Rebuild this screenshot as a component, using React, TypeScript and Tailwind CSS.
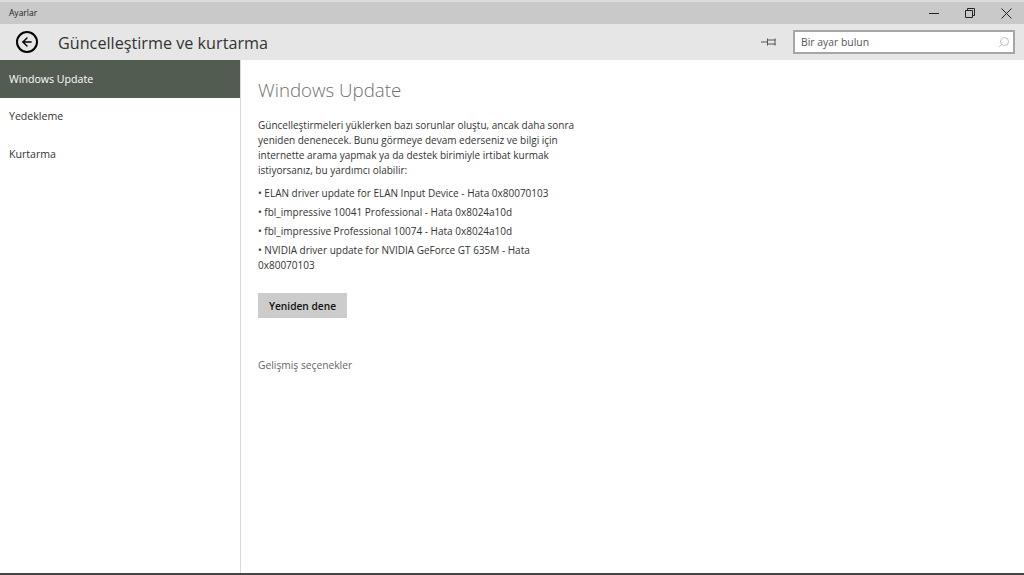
import { ArrowLeft, Search } from "lucide-react";

const NAV_ITEMS = ["Windows Update", "Yedekleme", "Kurtarma"];

const ERRORS = [
  "ELAN driver update for ELAN Input Device - Hata 0x80070103",
  "fbl_impressive 10041 Professional - Hata 0x8024a10d",
  "fbl_impressive Professional 10074 - Hata 0x8024a10d",
  "NVIDIA driver update for NVIDIA GeForce GT 635M - Hata 0x80070103",
];

function WindowButtons() {
  return (
    <div className="flex items-center text-[#222]">
      <div className="flex w-[36px] justify-center">
        <svg width="10" height="10" viewBox="0 0 10 10">
          <path d="M0 5.5h10" stroke="currentColor" fill="none" />
        </svg>
      </div>
      <div className="flex w-[36px] justify-center">
        <svg width="10" height="10" viewBox="0 0 10 10">
          <path d="M0.5 2.5h7v7h-7zM2.5 2.5v-2h7v7h-2" stroke="currentColor" fill="none" />
        </svg>
      </div>
      <div className="flex w-[36px] justify-center">
        <svg width="11" height="11" viewBox="0 0 11 11">
          <path d="M0.5 0.5l10 10M10.5 0.5l-10 10" stroke="currentColor" fill="none" />
        </svg>
      </div>
    </div>
  );
}

export default function App() {
  return (
    <div className="flex h-[575px] w-[1024px] flex-col overflow-hidden bg-white font-['Open_Sans',sans-serif] text-[#222]">
      <div className="h-[2px] bg-[#dcdcdc]" />
      <div className="flex h-[22px] items-center justify-between bg-[#c9c9c9] pl-[9px]">
        <span className="text-[8.5px]">Ayarlar</span>
        <WindowButtons />
      </div>
      <div className="flex h-[36px] items-center bg-[#e6e6e6]">
        <div className="ml-[16px] flex h-[22px] w-[22px] items-center justify-center rounded-full border-2 border-black">
          <ArrowLeft size={14} strokeWidth={2.5} className="text-black" />
        </div>
        <h1 className="ml-[20px] pt-[2px] text-[16.2px] text-[#333]">Güncelleştirme ve kurtarma</h1>
        <svg width="16" height="10" viewBox="0 0 16 10" className="ml-auto text-[#555]">
          <path d="M0 5h6M6.5 1.5v7M6.5 3h8M6.5 7h8M14 1.5v7" stroke="currentColor" fill="none" />
        </svg>
        <div className="ml-[16px] mr-[9px] flex h-[24px] w-[222px] items-center justify-between border-2 border-[#a6a6a6] bg-white pl-[6px] pr-[3px]">
          <span className="pt-[1.5px] text-[10.4px] text-[#555]">Bir ayar bulun</span>
          <Search size={12} className="-scale-x-100 text-[#bbb]" />
        </div>
      </div>
      <div className="flex min-h-0 flex-1">
        <nav className="w-[241px] shrink-0 border-r border-[#d9d9d9]">
          {NAV_ITEMS.map((item, i) => (
            <div
              key={item}
              className={`flex h-[37.5px] items-center pl-[9px] pt-[2px] text-[10.6px] ${
                i === 0 ? "bg-[#525c51] text-white" : "text-[#333]"
              }`}
            >
              {item}
            </div>
          ))}
        </nav>
        <main className="flex-1 pl-[17px] pt-[17px]">
          <h2 className="text-[18.7px] font-light leading-[26px] text-[#707070]">Windows Update</h2>
          <p className="mt-[14.5px] w-[325px] text-[10px] leading-[15px] text-[#333]">
            Güncelleştirmeleri yüklerken bazı sorunlar oluştu, ancak daha sonra yeniden denenecek. Bunu görmeye devam
            ederseniz ve bilgi için internette arama yapmak ya da destek birimiyle irtibat kurmak istiyorsanız, bu
            yardımcı olabilir:
          </p>
          <ul className="mt-[8px] flex w-[325px] flex-col gap-[4px] text-[10px] leading-[15px] text-[#333]">
            {ERRORS.map((err) => (
              <li key={err}>• {err}</li>
            ))}
          </ul>
          <button className="mt-[20.5px] flex h-[25px] w-[89px] items-center justify-center bg-[#cccccc] pt-[2px] text-[10.2px] font-semibold text-[#111]">
            Yeniden dene
          </button>
          <div className="mt-[39.5px] text-[10.25px] leading-[15px] text-[#666]">Gelişmiş seçenekler</div>
        </main>
      </div>
      <div className="h-[2px] bg-[#444]" />
    </div>
  );
}
